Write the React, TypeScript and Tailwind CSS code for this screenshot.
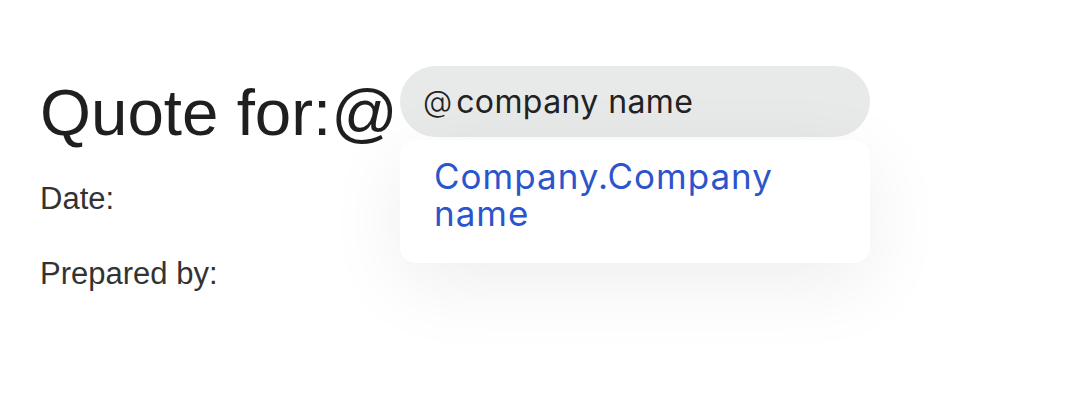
import React from "react";

export default function App() {
  return (
    <div className="relative w-[1070px] h-[406px] bg-white overflow-hidden">
      <div className="px-10 pt-[81px] font-['Liberation_Sans',Arial,sans-serif]">
        <h1 className="text-[65.5px] leading-[64px] text-[#1f1f1f]">Quote for:@</h1>
        <p className="mt-[34px] text-[31px] leading-[40px] text-[#333333]">Date:</p>
        <p className="mt-[35px] text-[31px] leading-[40px] text-[#333333]">Prepared by:</p>
      </div>

      <div className="absolute left-[400px] top-[66px] w-[470px] font-['Inter','Noto_Sans',sans-serif]">
        <div className="flex h-[71px] items-center rounded-full bg-[#e8e9e9] pl-[23px] text-[32px] text-[#222222]">
          <span className="mr-[4px] text-[30px] font-light">@</span>
          <span className="tracking-[0.4px]">company name</span>
        </div>
        <div className="mt-[3px] rounded-2xl bg-white px-[34px] pt-[18px] pb-[31px] shadow-[0_20px_80px_rgba(0,0,0,0.07)]">
          <div className="text-[35px] leading-[37px] tracking-[1px] text-[#2b55cc]">Company.Company name</div>
        </div>
      </div>
    </div>
  );
}
